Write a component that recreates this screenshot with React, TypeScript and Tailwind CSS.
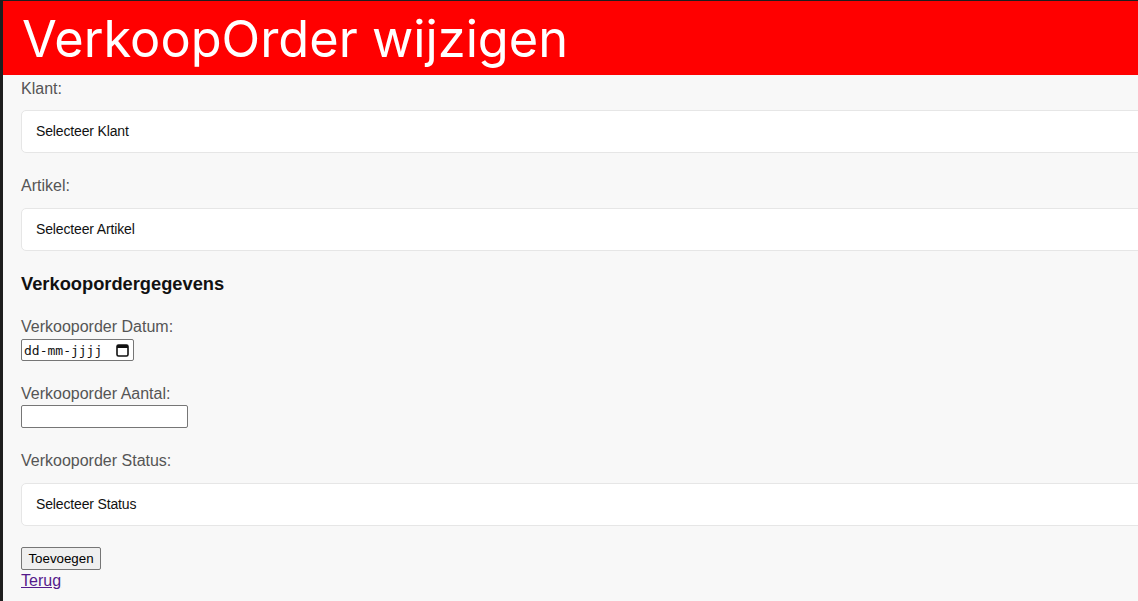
import React from "react";

const labelCls =
  "block h-[18px] leading-[18px] text-[16px] text-[#555555] whitespace-nowrap";
const selectCls =
  "w-[1140px] h-[43px] bg-white border border-[#e6e6e6] rounded-[5px] flex items-center pl-[14px] text-[14px] tracking-[-0.15px] text-[#111111]";

export default function App() {
  return (
    <div
      className="w-[1138px] h-[601px] overflow-hidden bg-[#1e1e1e] pt-[1px] pl-[3px]"
      style={{ fontFamily: '"Liberation Sans", Arial, sans-serif' }}
    >
      <div className="h-full bg-[#f8f8f8] overflow-hidden">
        <header className="h-[74px] bg-[#ff0000] flex items-center pl-[19px] pt-[2px]">
          <h1
            className="text-[50.5px] leading-none text-white font-normal whitespace-nowrap"
            style={{ fontFamily: "Inter, sans-serif" }}
          >
            VerkoopOrder wijzigen
          </h1>
        </header>
        <div className="pl-[18px] flex flex-col items-start">
          <label className={labelCls + " mt-[5px]"}>Klant:</label>
          <div className={selectCls + " mt-[12px]"}>Selecteer Klant</div>

          <label className={labelCls + " mt-[24px]"}>Artikel:</label>
          <div className={selectCls + " mt-[13px]"}>Selecteer Artikel</div>

          <h3 className="mt-[22px] h-[22px] leading-[22px] text-[18.3px] font-bold text-[#111111]">
            Verkoopordergegevens
          </h3>

          <label className={labelCls + " mt-[23px]"}>Verkooporder Datum:</label>
          <div className="mt-[3px] w-[113px] h-[22px] bg-white border border-[#767676] rounded-[2px] flex items-center pl-[2px] pr-[3px] justify-between">
            <span
              className="text-[13px] text-[#111111] leading-none"
              style={{ fontFamily: '"DejaVu Sans Mono", monospace' }}
            >
              dd-mm-jjjj
            </span>
            <svg width="13" height="14" viewBox="0 0 13 14" className="mr-[1px]">
              <rect x="1" y="2" width="11" height="11" rx="1.5" fill="none" stroke="#111" strokeWidth="1.6" />
              <rect x="1" y="2" width="11" height="3" fill="#111" />
            </svg>
          </div>

          <label className={labelCls + " mt-[24px]"}>Verkooporder Aantal:</label>
          <input
            type="text"
            className="mt-[2px] w-[167px] h-[23px] bg-white border border-[#767676] rounded-[2px] outline-none"
          />

          <label className={labelCls + " mt-[24px]"}>Verkooporder Status:</label>
          <div className={selectCls + " mt-[13px]"}>Selecteer Status</div>

          <button className="mt-[21px] w-[80px] h-[23px] bg-[#efefef] border border-[#767676] rounded-[2px] text-[13.33px] text-black leading-none">
            Toevoegen
          </button>
          <a href="#" className="h-[20px] leading-[22px] text-[16px] text-[#551a8b] underline">
            Terug
          </a>
        </div>
      </div>
    </div>
  );
}
